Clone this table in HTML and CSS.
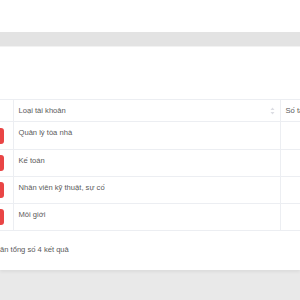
FILE: index.html
```html
<!DOCTYPE html>
<html lang="vi">
<head>
<meta charset="utf-8">
<link rel="stylesheet" href="styles.css">
</head>
<body>
  <div class="topbar"></div>
  <div class="band"></div>
  <section class="card">
    <table class="grid">
      <colgroup>
        <col class="c-act">
        <col class="c-type">
        <col class="c-num">
      </colgroup>
      <thead>
        <tr>
          <th></th>
          <th>
            <div class="th-inner">
              <span>Loại tài khoản</span>
              <svg class="sort" width="5" height="8" viewBox="0 0 5 8"><path d="M2.5 0.5 L4.5 3 H0.5 Z M2.5 7.5 L4.5 5 H0.5 Z" fill="#dcdde3"/></svg>
            </div>
          </th>
          <th>Số tài khoản</th>
        </tr>
      </thead>
      <tbody>
        <tr class="first"><td class="act"><span class="btn"></span></td><td>Quản lý tòa nhà</td><td></td></tr>
        <tr><td class="act"><span class="btn"></span></td><td>Kế toán</td><td></td></tr>
        <tr><td class="act"><span class="btn"></span></td><td>Nhân viên kỹ thuật, sự cố</td><td></td></tr>
        <tr><td class="act"><span class="btn"></span></td><td>Môi giới</td><td></td></tr>
      </tbody>
    </table>
    <p class="summary">ăn tổng số 4 kết quả</p>
  </section>
  <div class="page-bottom"></div>
</body>
</html>
```
FILE: styles.css
```css
html, body {
  margin: 0;
  padding: 0;
  width: 300px;
  height: 300px;
  overflow: hidden;
  background: #e9e9e9;
  font-family: "Liberation Sans", Arial, sans-serif;
  color: #5a5a5a;
}

.topbar {
  height: 32px;
  background: #fff;
}

.band {
  height: 14px;
  background: #e3e3e3;
  border-bottom: 1px solid #f2f2f2;
}

.card {
  background: #fff;
  height: 223px;
  padding-top: 52px;
  box-sizing: border-box;
  overflow: hidden;
  box-shadow: 0 2px 3px rgba(0, 0, 0, 0.06);
}

.grid {
  border-collapse: collapse;
  margin-left: -20px;
  width: 345px;
  table-layout: fixed;
  font-size: 7.6px;
}

.c-act { width: 33px; }
.c-type { width: 267px; }
.c-num { width: 45px; }

.grid th,
.grid td {
  border-top: 1px solid #eceef2;
  border-bottom: 1px solid #eceef2;
  border-right: 1px solid #eceef2;
  text-align: left;
  padding: 0 5px;
  white-space: nowrap;
  overflow: hidden;
}

.grid th {
  height: 21px;
  font-weight: normal;
  vertical-align: middle;
}

.grid td {
  height: 27px;
  padding-top: 6px;
  vertical-align: top;
  box-sizing: border-box;
}

.grid tr.first td { height: 28px; }

.grid td.act {
  padding: 0;
  vertical-align: middle;
}

.th-inner {
  display: flex;
  align-items: center;
  justify-content: space-between;
}

.sort {
  display: block;
}

.btn {
  display: block;
  width: 16px;
  height: 16px;
  margin-left: 8px;
  border-radius: 3px;
  background: #e94545;
}

.summary {
  margin: 14px 0 0 0;
  font-size: 7.6px;
  line-height: 10px;
}

.page-bottom {
  height: 30px;
}
```
